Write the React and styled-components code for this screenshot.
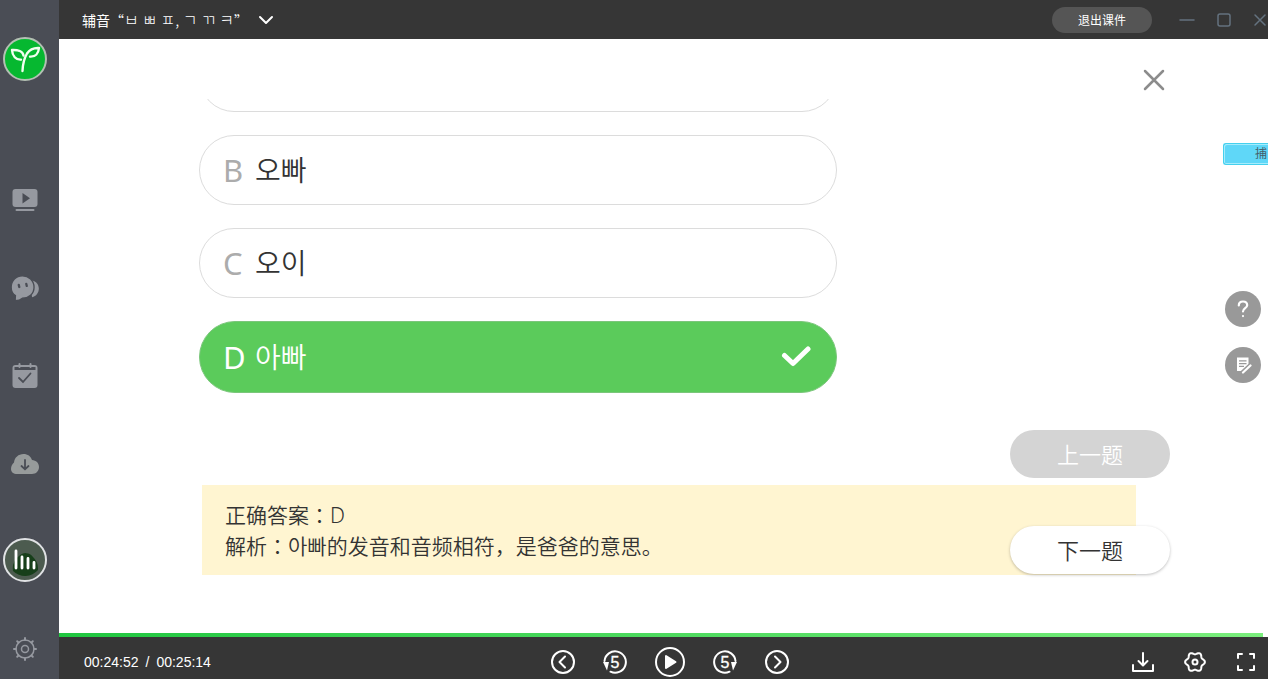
import { useState } from 'react';
import styled, { createGlobalStyle, css } from 'styled-components';

const GlobalStyle = createGlobalStyle`
  * {
    box-sizing: border-box;
  }

  body {
    margin: 0;
    font-family: 'Liberation Sans', 'Noto Sans CJK SC', 'Noto Sans CJK KR', sans-serif;
  }

  button {
    padding: 0;
    border: 0;
    background: none;
    color: inherit;
    font: inherit;
    cursor: pointer;
  }

  svg {
    display: block;
  }
`;

const Page = styled.div`
  min-height: 100vh;
  display: grid;
  grid-template-columns: 59px minmax(0, 1fr);
`;

/* sidebar */

const Sidebar = styled.nav`
  padding: 37px 9px 8px 0;
  background: #4a4d55;
  color: #9699a0;

  display: flex;
  flex-direction: column;
  align-items: center;
`;

const SideGroup = styled.div`
  margin: 97px 0 52px;

  display: flex;
  flex-direction: column;
  gap: 44px;
`;

const SideButton = styled.button`
  width: 44px;
  height: 44px;
  margin-top: ${({ $last }) => ($last ? 'auto' : '0')};

  display: flex;
  justify-content: center;
  align-items: center;
`;

/* main area */

const Main = styled.div`
  display: flex;
  flex-direction: column;
`;

const TitleBar = styled.header`
  height: 39px;
  padding: 0 1px 0 23px;
  background: #363636;
  color: #fff;

  display: flex;
  align-items: center;
`;

const Title = styled.h1`
  margin: 0;
  font: 400 14px/24px 'Noto Sans CJK SC', sans-serif;
`;

const Jamo = styled.span`
  font: 300 16px/24px 'Noto Sans CJK KR', sans-serif;
`;

const TitleToggle = styled.button`
  margin-left: 10px;
`;

const ExitButton = styled.button`
  width: 100px;
  height: 26px;
  margin-left: auto;
  border-radius: 13px;
  background: #555;
  font-size: 12px;
`;

const WindowButtons = styled.div`
  margin-left: 27px;
  color: #64727f;

  display: flex;
  gap: 22px;
`;

const Stage = styled.main`
  position: relative;
  flex: 1;
  padding: 30px 103px 58px 140px;
  background: #fff;
  overflow: hidden;
`;

const QuizRow = styled.div`
  display: flex;
  justify-content: space-between;
  align-items: flex-start;
`;

const OptionList = styled.div`
  width: 66%;
  height: 294px;
  margin-top: 30px;
  overflow: hidden;

  display: flex;
  flex-direction: column;
  justify-content: flex-end;
  gap: 23px;
`;

const Option = styled.button`
  flex: none;
  height: 70px;
  padding: 0 25px 0 23px;
  border: 1px solid #dcdcdc;
  border-radius: 36px;
  background: #fff;
  color: #333;
  text-align: left;

  display: grid;
  grid-template-columns: 32px 1fr auto;
  align-items: center;

  ${({ $correct }) =>
    $correct &&
    css`
      height: 72px;
      border-color: #7bc67b;
      background: #5bcb5b;
      color: #fff;
    `}
`;

const OptionLetter = styled.span`
  color: ${({ $correct }) => ($correct ? '#fff' : '#acacac')};
  font: 400 31px/40px 'Noto Sans', sans-serif;
`;

const OptionText = styled.span`
  padding-bottom: 2px;
  font: 350 28px/40px 'Noto Sans CJK KR', sans-serif;
`;

const Explanation = styled.section`
  margin: 92px 29px 0 3px;
  padding: 14px 23px;
  background: #fff5d1;
  color: #333;
  font: 350 21px/31px 'Noto Sans CJK SC', sans-serif;

  p {
    height: 31px;
    margin: 0;
  }
`;

/* full-width colon centred in its cell */
const Colon = styled.span`
  font-family: 'Noto Sans CJK JP', sans-serif;
`;

const AnswerKey = styled.span`
  font-family: 'Noto Sans', sans-serif;
`;

const QuestionNav = styled.div`
  position: absolute;
  right: 98px;
  bottom: 59px;

  display: flex;
  flex-direction: column;
  gap: 48px;
`;

const NavButton = styled.button`
  width: 160px;
  height: 48px;
  padding-bottom: 2px;
  border-radius: 24px;
  background: #fff;
  box-shadow: 0 1px 3px rgba(0, 0, 0, 0.25);
  color: #333;
  font: 350 22px 'Noto Sans CJK SC', sans-serif;

  &:disabled {
    background: #d4d4d4;
    box-shadow: none;
    color: #fff;
  }
`;

const CaptureTag = styled.button`
  position: absolute;
  top: 104px;
  right: 0;
  width: 45px;
  height: 22px;
  padding-left: 31px;
  border: 1px solid #45d0ee;
  border-right: 0;
  border-radius: 3px 0 0 3px;
  background: #5fd7f8;
  box-shadow: inset 1px 1px 0 #a5ecfc, inset 0 -1px 0 #a5ecfc;
  color: #45606b;
  font-size: 12px;
  line-height: 18px;
  text-align: left;
  overflow: hidden;
`;

const SideTools = styled.div`
  position: absolute;
  top: 252px;
  right: 7px;

  display: flex;
  flex-direction: column;
  gap: 20px;
`;

const ToolButton = styled.button`
  width: 36px;
  height: 36px;
  border-radius: 50%;
  background: #999;
  color: #fff;

  display: flex;
  justify-content: center;
  align-items: center;
`;

/* player */

const SeekBar = styled.input`
  appearance: none;
  display: block;
  width: 100%;
  height: 4px;
  margin: 0;
  background: #fff linear-gradient(90deg, #20c640, #7bee7d) no-repeat;

  &::-webkit-slider-thumb {
    appearance: none;
    width: 4px;
    height: 4px;
  }
`;

const PlayerBar = styled.footer`
  height: 42px;
  padding: 8px 12px 0 25px;
  background: #363636;
  color: #fff;

  display: grid;
  grid-template-columns: 1fr auto 1fr;
  align-items: center;
`;

const Time = styled.div`
  font-size: 14px;

  display: flex;
  gap: 7px;
`;

const PlayerGroup = styled.div`
  height: 34px;

  display: flex;
  align-items: center;
  justify-content: flex-end;
  gap: ${({ $gap }) => $gap}px;
`;

const Line = ({ size = 24, width = 2, children }) => (
  <svg
    width={size}
    height={size}
    viewBox={`0 0 ${size} ${size}`}
    fill="none"
    stroke="currentColor"
    strokeWidth={width}
    strokeLinecap="round"
    strokeLinejoin="round"
    aria-hidden="true"
  >
    {children}
  </svg>
);

const Logo = () => (
  <svg width="44" height="44" viewBox="0 0 44 44" fill="none" aria-hidden="true">
    <circle cx="22" cy="22" r="21" fill="#06b830" stroke="#b3c0b3" strokeWidth="2" />
    <g stroke="#f3fff0" strokeWidth="2.4" strokeLinecap="round" strokeLinejoin="round">
      <path d="M19.500 34c.3-7 1.200-12 4.500-17.500C27 12 31 10.700 36 11c-.5 5-3.500 9-9 8.600" />
      <path d="M18 22.600c-5 .4-8.700-3.600-9-9.600 6-.3 11 1.500 11.500 5.500" />
    </g>
  </svg>
);

const LessonIcon = () => (
  <svg width="26" height="24" viewBox="0 0 26 24" aria-hidden="true">
    <rect x="0.5" y="1" width="25" height="18" rx="3" fill="currentColor" />
    <path d="M10.500 5v10.500l7.500-5.200z" fill="#4a4d55" />
    <rect x="3.500" y="21" width="19" height="2" rx="1" fill="currentColor" />
  </svg>
);

const ChatIcon = () => (
  <svg width="30" height="26" viewBox="0 0 28 25" aria-hidden="true">
    <path d="M18 4.500c5.500.5 9.300 4 9.300 8.500 0 4-2.500 7.500-6.500 8.500z" fill="currentColor" />
    <path
      d="M11.500.7C17.600.7 22.700 5.300 22.700 11.700S17.600 22.300 11.500 22.300c-1.500 1.400-4 2.300-7 2.500l.3-5C2 18 .7 15 .7 11.700.7 5.300 5.400.7 11.500.7z"
      fill="currentColor"
      stroke="#4a4d55"
      strokeWidth="1.300"
    />
    <path d="M8 9.500l.5 2M15.200 8.500l.5 2" stroke="#4a4d55" strokeWidth="2.200" strokeLinecap="round" />
  </svg>
);

const CalendarIcon = () => (
  <svg width="26" height="26" viewBox="0 0 26 26" fill="none" aria-hidden="true">
    <rect x="0.5" y="2" width="25" height="23" rx="3" fill="currentColor" />
    <path d="M2.500 4h21v3h-21z" fill="#4a4d55" />
    <path d="M7.500 1v3M18.500 1v3" stroke="currentColor" strokeWidth="2" strokeLinecap="round" />
    <path d="M7 15l4 4 7.500-8.500" stroke="#4a4d55" strokeWidth="1.800" strokeLinecap="round" />
  </svg>
);

const CloudIcon = () => (
  <svg width="28" height="22" viewBox="0 0 28 22" fill="none" aria-hidden="true">
    <path
      d="M6 21c-3.500 0-6-2-6-5 0-2.700 1.300-5 3-6.500C3.500 4.500 7.500 1 12.500 1c4.200 0 7.300 2.300 8.500 6 4 .3 7 3 7 7 0 4.200-3 7-7 7z"
      fill="#979b9b"
    />
    <path d="M14 7v9M10.500 13l3.500 3.300 3.500-3.300" stroke="#4a4d55" strokeWidth="1.800" strokeLinecap="round" />
  </svg>
);

const LiveIcon = () => (
  <svg width="44" height="44" viewBox="0 0 44 44" fill="none" aria-hidden="true">
    <circle cx="22" cy="22" r="21" fill="#4c5b4f" stroke="#e0e2e4" strokeWidth="2" />
    <path d="M10 33a16 16 0 0 1 6-15 9 9 0 0 1 14 1 16 16 0 0 1 5 13 17 17 0 0 1-25 1z" fill="#173f1a" />
    <path d="M13 13v17M19 19v11M25 20.500v9.500M31 24.500v5.500" stroke="#fff" strokeWidth="2.800" strokeLinecap="round" />
  </svg>
);

const GEAR_TEETH = [0, 45, 90, 135, 180, 225, 270, 315];

const SettingsIcon = () => (
  <Line size={26} width={1.5}>
    <circle cx="13" cy="13" r="9" />
    <circle cx="13" cy="13" r="3.500" />
    {GEAR_TEETH.map((deg) => (
      <path key={deg} d="M13 4V2" strokeWidth="2" transform={`rotate(${deg} 13 13)`} />
    ))}
  </Line>
);

const CheckIcon = () => (
  <Line size={30} width={5}>
    <path d="M3.500 13.500l8.500 8L27 7" />
  </Line>
);

const NoteIcon = () => (
  <svg width="18" height="18" viewBox="0 0 18 18" aria-hidden="true">
    <path d="M3 1.500h11.500V8L7 15H3z" fill="#fff" />
    <path d="M5 4.800h7.500M5 7.600h7.500M5 10.400h5" stroke="#999" strokeWidth="1.200" />
    <path d="M9 16.500l7.500-7" stroke="#999" strokeWidth="4.500" />
    <path d="M9 16.500l7.500-7" stroke="#fff" strokeWidth="2.200" strokeLinecap="round" />
  </svg>
);

const Skip5Icon = ({ forward }) => (
  <svg width="24" height="24" viewBox="0 0 24 24" aria-hidden="true">
    <g transform={forward ? 'translate(24 0) scale(-1 1)' : undefined}>
      <path
        d="M1.500 11A10.700 10.700 0 1 1 7.500 21.700"
        fill="none"
        stroke="currentColor"
        strokeWidth="2"
        strokeLinecap="round"
      />
      <path d="M0 12h6l-2 8.500z" fill="currentColor" />
    </g>
    <text
      x="12"
      y="18"
      textAnchor="middle"
      fill="currentColor"
      stroke="currentColor"
      strokeWidth="0.3"
      fontSize="16"
      fontFamily="Liberation Sans"
    >
      5
    </text>
  </svg>
);

// outline with six soft lobes
const gearOutline = Array.from({ length: 72 }, (_, i) => {
  const angle = (i * Math.PI) / 36;
  const r = 8.8 + 1.1 * Math.cos(6 * angle);
  return `${(11 + r * Math.cos(angle)).toFixed(2)},${(11 + r * Math.sin(angle)).toFixed(2)}`;
}).join(' ');

const options = [
  { letter: 'A', text: '' },
  { letter: 'B', text: '오빠' },
  { letter: 'C', text: '오이' },
  { letter: 'D', text: '아빠', correct: true },
];

const App = () => {
  const [progress, setProgress] = useState(99.6);

  return (
    <Page>
      <GlobalStyle />
      <Sidebar>
        <SideButton aria-label="首页">
          <Logo />
        </SideButton>
        <SideGroup>
          <SideButton aria-label="课程">
            <LessonIcon />
          </SideButton>
          <SideButton aria-label="消息">
            <ChatIcon />
          </SideButton>
          <SideButton aria-label="计划">
            <CalendarIcon />
          </SideButton>
          <SideButton aria-label="下载">
            <CloudIcon />
          </SideButton>
        </SideGroup>
        <SideButton aria-label="正在学习">
          <LiveIcon />
        </SideButton>
        <SideButton $last aria-label="设置">
          <SettingsIcon />
        </SideButton>
      </Sidebar>

      <Main>
        <TitleBar>
          <Title>
            辅音“<Jamo>ㅂ ㅃ ㅍ, ㄱ ㄲ ㅋ</Jamo>”
          </Title>
          <TitleToggle aria-label="展开目录">
            <Line size={16}>
              <path d="M2 5l6 6 6-6" />
            </Line>
          </TitleToggle>
          <ExitButton>退出课件</ExitButton>
          <WindowButtons>
            <button aria-label="最小化">
              <Line size={16} width={1.5}>
                <path d="M1 8h14" />
              </Line>
            </button>
            <button aria-label="最大化">
              <Line size={14} width={1.5}>
                <rect x="1" y="1" width="12" height="12" rx="2" />
              </Line>
            </button>
            <button aria-label="关闭">
              <Line size={14} width={1.5}>
                <path d="M2 2l10 10M12 2L2 12" />
              </Line>
            </button>
          </WindowButtons>
        </TitleBar>

        <Stage>
          <QuizRow>
            <OptionList>
              {options.map(({ letter, text, correct }) => (
                <Option key={letter} $correct={correct}>
                  <OptionLetter $correct={correct}>{text && letter}</OptionLetter>
                  <OptionText>{text}</OptionText>
                  {correct && <CheckIcon />}
                </Option>
              ))}
            </OptionList>
            <button aria-label="关闭题目">
              <Line size={22} width={2.5}>
                <path d="M2 2l18 18M20 2L2 20" stroke="#8c8c8c" />
              </Line>
            </button>
          </QuizRow>

          <Explanation>
            <p>
              正确答案<Colon>：</Colon>
              <AnswerKey>D</AnswerKey>
            </p>
            <p>
              解析<Colon>：</Colon>아빠的发音和音频相符，是爸爸的意思。
            </p>
          </Explanation>

          <QuestionNav>
            <NavButton disabled>上一题</NavButton>
            <NavButton>下一题</NavButton>
          </QuestionNav>

          <CaptureTag>捕</CaptureTag>
          <SideTools>
            <ToolButton aria-label="帮助">
              <Line size={18} width={2.2}>
                <path d="M4.800 5.500c0-2.500 1.800-4 4.200-4s4.200 1.500 4.200 3.800c0 2.700-4.200 3.200-4.200 6.200M9 16v.1" />
              </Line>
            </ToolButton>
            <ToolButton aria-label="笔记">
              <NoteIcon />
            </ToolButton>
          </SideTools>
        </Stage>

        <SeekBar
          type="range"
          aria-label="播放进度"
          min="0"
          max="100"
          step="0.1"
          value={progress}
          onChange={(e) => setProgress(Number(e.target.value))}
          style={{ backgroundSize: `${progress}% 100%` }}
        />
        <PlayerBar>
          <Time>
            <span>00:24:52</span>
            <span>/</span>
            <span>00:25:14</span>
          </Time>
          <PlayerGroup $gap={28}>
            <button aria-label="上一节">
              <Line>
                <circle cx="12" cy="12" r="11" />
                <path d="M14 6.500L8.500 12l5.500 5.500" />
              </Line>
            </button>
            <button aria-label="后退5秒">
              <Skip5Icon />
            </button>
            <button aria-label="播放">
              <Line size={30}>
                <circle cx="15" cy="15" r="14" />
                <path d="M11 9v12l9.500-6z" fill="currentColor" />
              </Line>
            </button>
            <button aria-label="前进5秒">
              <Skip5Icon forward />
            </button>
            <button aria-label="下一节">
              <Line>
                <circle cx="12" cy="12" r="11" />
                <path d="M10 6.500l5.500 5.500-5.500 5.500" />
              </Line>
            </button>
          </PlayerGroup>
          <PlayerGroup $gap={30}>
            <button aria-label="下载课件">
              <Line size={22}>
                <path d="M1 14v6h20v-6M11 2v12M6.500 10l4.500 4.500 4.500-4.500" />
              </Line>
            </button>
            <button aria-label="播放设置">
              <Line size={22}>
                <polygon points={gearOutline} />
                <circle cx="11" cy="11" r="2.500" />
              </Line>
            </button>
            <button aria-label="全屏">
              <Line size={20}>
                <path d="M2 6V2h4M14 2h4v4M18 14v4h-4M6 18H2v-4" />
              </Line>
            </button>
          </PlayerGroup>
        </PlayerBar>
      </Main>
    </Page>
  );
};

export default App;
